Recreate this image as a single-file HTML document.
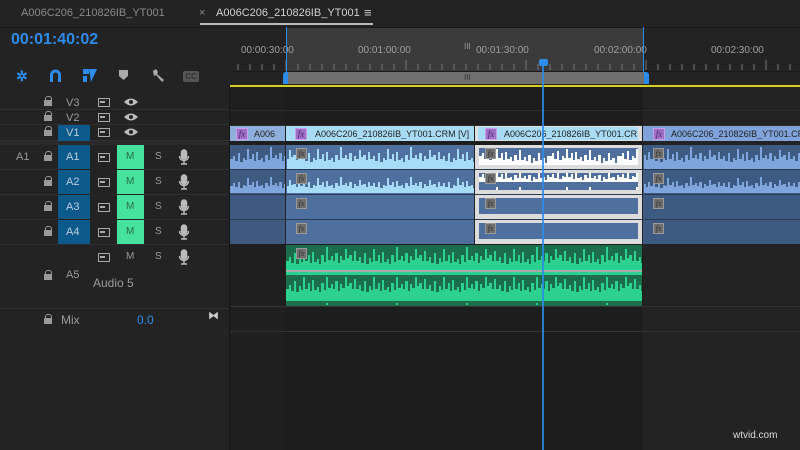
<!DOCTYPE html>
<html><head><meta charset="utf-8"><style>
*{margin:0;padding:0;box-sizing:border-box}
body{width:800px;height:450px;background:#232323;font-family:"Liberation Sans",sans-serif;overflow:hidden;position:relative;color:#aaa}
.a{position:absolute}
.t{font-size:11px;color:#9a9a9a;white-space:nowrap}
.fx{position:absolute;width:11px;height:11px;background:#6e6e6e;border:1px solid #999;font:italic 8px "Liberation Serif",serif;color:#333;text-align:center;line-height:9px}
.fxp{position:absolute;width:12px;height:12px;background:#a070c8;border:1px solid #c9a0e8;font:italic 9px "Liberation Serif",serif;color:#4a2a70;text-align:center;line-height:10px}
.cl{position:absolute;font-size:9px;color:#222;white-space:nowrap;overflow:hidden}
.row{position:absolute;left:0;width:229px;border-bottom:1px solid #2f2f2f}
.lk{position:absolute;width:8px;height:10px}
.lk:before{content:"";position:absolute;left:1px;top:0;width:5px;height:5px;border:1.5px solid #999;border-bottom:none;border-radius:3px 3px 0 0}
.lk:after{content:"";position:absolute;left:0;top:4px;width:8px;height:6px;background:#999}
.tg{position:absolute;width:12px;height:9px;border:1.5px solid #aaa}
.tg:after{content:"";position:absolute;left:1px;top:2px;width:5px;height:1.5px;background:#aaa}
</style></head><body>

<!-- tabs -->
<div class="a t" style="left:21px;top:7px;font-size:11px;color:#8a8a8a">A006C206_210826IB_YT001</div>
<div class="a t" style="left:199px;top:7px;font-size:11px;color:#888">×</div>
<div class="a t" style="left:216px;top:7px;font-size:11px;color:#d0d0d0">A006C206_210826IB_YT001</div>
<div class="a t" style="left:364px;top:5px;font-size:13px;color:#ccc">≡</div>
<div class="a" style="left:200px;top:23px;width:173px;height:2px;background:#bbb"></div>
<div class="a" style="left:0;top:27px;width:800px;height:1px;background:#1a1a1a"></div>

<div class="a" style="left:11px;top:31px;font-size:16px;font-weight:bold;color:#2d8ceb">00:01:40:02</div>

<!-- tool icons -->
<div class="a" style="left:16px;top:68px;color:#2d8ceb;font-size:14px;font-weight:bold">✲</div>
<svg class="a" style="left:49px;top:69px" width="13" height="13"><path d="M1 13V6a5.5 5.5 0 0 1 11 0v7h-3V6a2.5 2.5 0 0 0-5 0v7z" fill="#2d8ceb"/></svg>
<svg class="a" style="left:82px;top:68px" width="16" height="15"><path d="M1 1h6v5H1zM1 8h4v6H1zM7 1h8l-6 13z" fill="#2d8ceb"/></svg>
<svg class="a" style="left:119px;top:70px" width="10" height="11"><path d="M0 0h9v6l-4.5 4L0 6z" fill="#aaa"/></svg>
<svg class="a" style="left:151px;top:68px" width="14" height="14"><path d="M2 3l3-2 2 3-1 2 7 6-2 2-6-7-2 1z" fill="#aaa"/></svg>
<div class="a" style="left:183px;top:71px;width:16px;height:11px;background:#555;border-radius:2px;font-size:8px;font-weight:bold;color:#333;text-align:center;line-height:11px">CC</div>

<!-- left header rows -->
<div class="row" style="top:94px;height:16px"></div>
<div class="row" style="top:110px;height:15px"></div>
<div class="row" style="top:125px;height:16px"></div>
<div class="a" style="left:0;top:141px;width:229px;height:4px;background:#2a2a2a"></div>
<div class="a" style="left:0;top:308px;width:229px;height:1px;background:#333"></div>
<div class="a" style="left:229px;top:85px;width:1px;height:365px;background:#151515"></div>

<div class="a" style="left:58px;top:125px;width:32px;height:16px;background:#0c5a8c"></div>
<div class="a t" style="left:66px;top:97px">V3</div><div class="a t" style="left:66px;top:112px">V2</div><div class="a t" style="left:66px;top:127px;color:#bcd">V1</div>

<!-- audio rows -->
<div class="row" style="top:145px;height:25px"></div>
<div class="row" style="top:170px;height:25px"></div>
<div class="row" style="top:195px;height:25px"></div>
<div class="row" style="top:220px;height:25px"></div>
<div class="a" style="left:58px;top:145px;width:32px;height:99px;background:#0c5a8c"></div>
<div class="a" style="left:117px;top:145px;width:27px;height:99px;background:#45e39e"></div>
<div class="a" style="left:58px;top:169px;width:86px;height:1px;background:#232323"></div>
<div class="a" style="left:58px;top:194px;width:86px;height:1px;background:#232323"></div>
<div class="a" style="left:58px;top:219px;width:86px;height:1px;background:#232323"></div>
<div class="a t" style="left:16px;top:151px">A1</div>
<div class="a t" style="left:66px;top:151px;color:#bcd">A1</div>
<div class="a t" style="left:66px;top:176px;color:#bcd">A2</div>
<div class="a t" style="left:66px;top:201px;color:#bcd">A3</div>
<div class="a t" style="left:66px;top:226px;color:#bcd">A4</div>
<div class="a t" style="left:66px;top:269px">A5</div>
<div class="a t" style="left:93px;top:276px;font-size:12px">Audio 5</div>
<div class="a t" style="left:61px;top:313px;font-size:12px">Mix</div>
<div class="a t" style="left:137px;top:313px;font-size:12px;color:#2d8ceb">0.0</div>
<div class="a t" style="left:208px;top:309px;color:#ccc">⧓</div>

<!-- locks -->
<div class="lk" style="left:44px;top:96px"></div>
<div class="lk" style="left:44px;top:111px"></div>
<div class="lk" style="left:44px;top:126px"></div>
<div class="lk" style="left:44px;top:151px"></div>
<div class="lk" style="left:44px;top:176px"></div>
<div class="lk" style="left:44px;top:201px"></div>
<div class="lk" style="left:44px;top:226px"></div>
<div class="lk" style="left:44px;top:270px"></div>
<div class="lk" style="left:44px;top:314px"></div>
<!-- toggles -->
<div class="tg" style="left:98px;top:98px"></div>
<div class="tg" style="left:98px;top:113px"></div>
<div class="tg" style="left:98px;top:128px"></div>
<div class="tg" style="left:98px;top:153px"></div>
<div class="tg" style="left:98px;top:178px"></div>
<div class="tg" style="left:98px;top:203px"></div>
<div class="tg" style="left:98px;top:228px"></div>
<div class="tg" style="left:98px;top:253px"></div>
<!-- eyes -->
<svg class="a" style="left:124px;top:97px" width="14" height="42"><g fill="#bbb">
<path d="M0 5Q7-2 14 5Q7 12 0 5z"/><path d="M0 20Q7 13 14 20Q7 27 0 20z"/><path d="M0 35Q7 28 14 35Q7 42 0 35z"/></g>
<g fill="#232323"><circle cx="7" cy="5" r="2"/><circle cx="7" cy="20" r="2"/><circle cx="7" cy="35" r="2"/></g></svg>

<div class="a t" style="left:126px;top:151px;color:#2a6a4a;font-size:10px">M</div>
<div class="a t" style="left:126px;top:176px;color:#2a6a4a;font-size:10px">M</div>
<div class="a t" style="left:126px;top:201px;color:#2a6a4a;font-size:10px">M</div>
<div class="a t" style="left:126px;top:226px;color:#2a6a4a;font-size:10px">M</div>
<div class="a t" style="left:126px;top:251px;font-size:10px">M</div>
<div class="a t" style="left:155px;top:151px;font-size:10px">S</div>
<div class="a t" style="left:155px;top:176px;font-size:10px">S</div>
<div class="a t" style="left:155px;top:201px;font-size:10px">S</div>
<div class="a t" style="left:155px;top:226px;font-size:10px">S</div>
<div class="a t" style="left:155px;top:251px;font-size:10px">S</div>
<svg class="a" style="left:178px;top:149px" width="12" height="117"><g fill="none" stroke="#bbb" stroke-width="1.5">
<rect x="3.5" y="1" width="5" height="9" rx="2.5" fill="#bbb"/><path d="M1.5 7a4.5 4.5 0 0 0 9 0M6 12v3M3 15h6"/>
<g transform="translate(0,25)"><rect x="3.5" y="1" width="5" height="9" rx="2.5" fill="#bbb"/><path d="M1.5 7a4.5 4.5 0 0 0 9 0M6 12v3M3 15h6"/></g>
<g transform="translate(0,50)"><rect x="3.5" y="1" width="5" height="9" rx="2.5" fill="#bbb"/><path d="M1.5 7a4.5 4.5 0 0 0 9 0M6 12v3M3 15h6"/></g>
<g transform="translate(0,75)"><rect x="3.5" y="1" width="5" height="9" rx="2.5" fill="#bbb"/><path d="M1.5 7a4.5 4.5 0 0 0 9 0M6 12v3M3 15h6"/></g>
<g transform="translate(0,100)"><rect x="3.5" y="1" width="5" height="9" rx="2.5" fill="#bbb"/><path d="M1.5 7a4.5 4.5 0 0 0 9 0M6 12v3M3 15h6"/></g>
</g></svg>

<!-- timeline ruler -->
<div class="a" style="left:286px;top:28px;width:357px;height:43px;background:#3b3b3b"></div>
<div class="a" style="left:230px;top:71px;width:570px;height:1px;background:#1a1a1a"></div>
<svg class="a" style="left:230px;top:60px" width="570" height="11">
<g stroke="#777" stroke-width="1">
<path d="M8 4v6M20 4v6M32 4v6M44 4v6M56 0v10M68 4v6M80 4v6M92 4v6M104 4v6M116 4v6M128 4v6M140 4v6M152 4v6M164 4v6M176 0v10M188 4v6M200 4v6M212 4v6M224 4v6M236 4v6M248 4v6M260 4v6M272 4v6M284 4v6M296 0v10M308 4v6M320 4v6M332 4v6M344 4v6M356 4v6M368 4v6M380 4v6M392 4v6M404 4v6M416 0v10M428 4v6M440 4v6M452 4v6M464 4v6M476 4v6M488 4v6M500 4v6M512 4v6M524 4v6M536 0v10M548 4v6M560 4v6"/>
</g></svg>
<div class="a t" style="left:241px;top:45px;font-size:10px;color:#a0a0a0">00:00:30:00</div>
<div class="a t" style="left:358px;top:45px;font-size:10px;color:#a0a0a0">00:01:00:00</div>
<div class="a t" style="left:476px;top:45px;font-size:10px;color:#a0a0a0">00:01:30:00</div>
<div class="a t" style="left:594px;top:45px;font-size:10px;color:#a0a0a0">00:02:00:00</div>
<div class="a t" style="left:711px;top:45px;font-size:10px;color:#a0a0a0">00:02:30:00</div>
<div class="a t" style="left:464px;top:42px;font-size:8px;color:#999">III</div>
<div class="a" style="left:285px;top:72px;width:360px;height:12px;background:#6f6f6f"></div>
<div class="a t" style="left:464px;top:73px;font-size:8px;color:#333">III</div>
<div class="a" style="left:283px;top:72px;width:5px;height:12px;background:#2d8ceb;border-radius:3px 0 0 0"></div>
<div class="a" style="left:644px;top:72px;width:5px;height:12px;background:#2d8ceb;border-radius:0 3px 0 0"></div>
<div class="a" style="left:286px;top:27px;width:1px;height:45px;background:#2d8ceb"></div>
<div class="a" style="left:643px;top:27px;width:1px;height:45px;background:#2d8ceb"></div>
<div class="a" style="left:230px;top:85px;width:570px;height:2px;background:#d8d020"></div>

<!-- track area -->
<div class="a" style="left:286px;top:87px;width:357px;height:363px;background:#1d1d1d"></div>
<div class="a" style="left:230px;top:87px;width:56px;height:363px;background:#1f1f1f"></div>
<div class="a" style="left:230px;top:110px;width:570px;height:1px;background:#2c2c2c"></div>
<div class="a" style="left:230px;top:125px;width:570px;height:1px;background:#2c2c2c"></div>
<div class="a" style="left:230px;top:306px;width:570px;height:1px;background:#333"></div>
<div class="a" style="left:230px;top:331px;width:570px;height:1px;background:#333"></div>

<!-- V1 clips -->
<div class="a" style="left:230px;top:126px;width:55px;height:15px;background:#8eaedc"></div>
<div class="fxp" style="left:236px;top:128px">fx</div><div class="cl" style="left:254px;top:129px">A006</div>
<div class="a" style="left:286px;top:126px;width:188px;height:15px;background:#a8dcf5"></div>
<div class="fxp" style="left:295px;top:128px">fx</div><div class="cl" style="left:315px;top:129px">A006C206_210826IB_YT001.CRM [V]</div>
<div class="a" style="left:475px;top:126px;width:167px;height:15px;background:#dedede"></div>
<div class="a" style="left:478px;top:127px;width:160px;height:13px;background:#a8dcf5"></div>
<div class="fxp" style="left:485px;top:128px">fx</div><div class="cl" style="left:504px;top:129px">A006C206_210826IB_YT001.CR</div>
<div class="a" style="left:643px;top:126px;width:157px;height:15px;background:#7fa3da"></div>
<div class="fxp" style="left:653px;top:128px">fx</div><div class="cl" style="left:671px;top:129px">A006C206_210826IB_YT001.CR</div>

<!-- audio clips -->
<div class="a" style="left:230px;top:145px;width:55px;height:99px;background:#3f5a80"></div>
<div class="a" style="left:286px;top:145px;width:188px;height:99px;background:#4f6f9f"></div>
<div class="a" style="left:643px;top:145px;width:157px;height:99px;background:#3d5a82"></div>
<div class="a" style="left:475px;top:145px;width:167px;height:99px;background:#dcdcdc"></div>
<div class="a" style="left:479px;top:148px;width:159px;height:17px;background:#4f6f9f"></div>
<div class="a" style="left:479px;top:173px;width:159px;height:17px;background:#4f6f9f"></div>
<div class="a" style="left:479px;top:198px;width:159px;height:16px;background:#4f6f9f"></div>
<div class="a" style="left:479px;top:223px;width:159px;height:16px;background:#4f6f9f"></div>
<div class="a" style="left:230px;top:169px;width:570px;height:1px;background:#2a3a50"></div>
<div class="a" style="left:230px;top:194px;width:570px;height:1px;background:#2a3a50"></div>
<div class="a" style="left:230px;top:219px;width:570px;height:1px;background:#2a3a50"></div>
<div class="a" style="left:285px;top:145px;width:1px;height:99px;background:#222"></div>
<div class="a" style="left:642px;top:145px;width:1px;height:99px;background:#222"></div>
<div class="a" style="left:474px;top:145px;width:1px;height:99px;background:#222"></div>

<svg class="a" style="left:230px;top:145px" width="570" height="50">
<defs>
<path id="p1" d="M0 24V14h3v-3h2v5h3v-8h2v9h3v-4h2v2h2v-11h2v10h3v-5h2v7h2v-9h2v8h3v-2h2v4h2v-7h3v5h2v-13h2v11h3v-3h2v4h2v-6h3v8h2v-5h2v3h3v-9h2v7h2v-2h3v5h2v-8h2v6h3v-4h2v3h2V24z"/>
<path id="p2" d="M0 24V17h3v-3h2v4h3v-5h2v6h3v-3h2v1h2v-8h2v7h3v-3h2v5h2v-6h2v5h3v-1h2v3h2v-5h3v3h2v-9h2v8h3v-2h2v3h2v-4h3v6h2v-4h2v2h3v-6h2v5h2v-1h3v3h2v-5h2v4h3v-3h2v2h2V24z"/>
<pattern id="b1" width="70" height="24" patternUnits="userSpaceOnUse"><use href="#p1" fill="#7ea6dc"/></pattern>
<pattern id="c1" width="70" height="24" patternUnits="userSpaceOnUse"><use href="#p1" fill="#a6dcf7"/></pattern>
<pattern id="b2" width="70" height="24" patternUnits="userSpaceOnUse"><use href="#p2" fill="#7ea6dc"/></pattern>
<pattern id="c2" width="70" height="24" patternUnits="userSpaceOnUse"><use href="#p2" fill="#a6dcf7"/></pattern>
</defs>
<rect x="0" y="0" width="55" height="24" fill="url(#b1)"/>
<rect x="57" y="0" width="187" height="24" fill="url(#c1)"/>
<rect x="414" y="0" width="156" height="24" fill="url(#b1)"/>
<rect x="0" y="25" width="55" height="24" fill="url(#b2)"/>
<rect x="57" y="25" width="187" height="24" fill="url(#c2)"/>
<rect x="414" y="25" width="156" height="24" fill="url(#b2)"/>
</svg>
<svg class="a" style="left:479px;top:148px" width="159" height="42">
<defs>
<path id="q1" d="M0 17V8h3v-3h2v6h3v-8h2v9h3v-4h2v2h2v-9h2v9h3v-5h2v7h2v-8h2v7h3v-2h2v4h2v-6h3v5h2v-10h2v10h3v-3h2v4h2v-6h3v8h2v-5h2v3h3v-8h2v7h2v-2h3v5h2v-7h2v6h3v-4h2v3h2V17z"/>
<path id="q2" d="M0 17V12h3v-3h2v4h3v-5h2v6h3v-3h2v1h2v-7h2v7h3v-3h2v5h2v-6h2v5h3v-1h2v3h2v-5h3v3h2v-8h2v8h3v-2h2v3h2v-4h3v6h2v-4h2v2h3v-6h2v5h2v-1h3v3h2v-5h2v4h3v-3h2v2h2V17z"/>
<pattern id="w3" width="70" height="17" patternUnits="userSpaceOnUse"><use href="#q1" fill="#fff"/></pattern>
<pattern id="w4" width="70" height="17" patternUnits="userSpaceOnUse"><use href="#q2" fill="#fff"/></pattern>
</defs>
<rect x="0" y="0" width="159" height="17" fill="url(#w3)"/>
<rect x="0" y="25" width="159" height="17" fill="url(#w4)"/>
</svg>
<div class="fx" style="left:296px;top:148px">fx</div>
<div class="fx" style="left:296px;top:173px">fx</div>
<div class="fx" style="left:296px;top:198px">fx</div>
<div class="fx" style="left:296px;top:223px">fx</div>
<div class="fx" style="left:485px;top:148px">fx</div>
<div class="fx" style="left:485px;top:173px">fx</div>
<div class="fx" style="left:485px;top:198px">fx</div>
<div class="fx" style="left:485px;top:223px">fx</div>
<div class="fx" style="left:653px;top:148px">fx</div>
<div class="fx" style="left:653px;top:173px">fx</div>
<div class="fx" style="left:653px;top:198px">fx</div>
<div class="fx" style="left:653px;top:223px">fx</div>

<!-- A5 green clip -->
<div class="a" style="left:286px;top:245px;width:356px;height:61px;background:#1b6d4c"></div>
<svg class="a" style="left:286px;top:245px" width="356" height="61">
<defs>
<path id="g" d="M0 28V16h3v-4h2v6h3v-10h2v11h3v-6h2v4h2v-13h2v12h3v-6h2v8h2v-11h2v10h3v-3h2v5h2v-9h3v7h2v-15h2v13h3v-4h2v5h2v-8h3v10h2v-7h2v4h3v-11h2v9h2v-3h3v6h2v-10h2v8h3v-5h2v4h2V28z"/>
<pattern id="g1" width="70" height="28" patternUnits="userSpaceOnUse"><use href="#g" fill="#2dd18f"/></pattern>
</defs>
<rect x="0" y="0" width="356" height="27" fill="url(#g1)"/>
<rect x="0" y="25" width="356" height="2" fill="#aaa"/>
<rect x="0" y="27" width="356" height="3" fill="#2dd18f"/>
<rect x="0" y="32" width="356" height="28" fill="url(#g1)"/>
</svg>
<div class="fx" style="left:296px;top:248px">fx</div>

<!-- playhead -->
<div class="a" style="left:542px;top:60px;width:2px;height:390px;background:#2d8ceb;opacity:.85"></div>
<div class="a" style="left:539px;top:59px;width:9px;height:7px;background:#2d8ceb;border-radius:2px"></div>

<div class="a" style="left:733px;top:430px;font-size:10px;color:#ddd">wtvid.com</div>
</body></html>
